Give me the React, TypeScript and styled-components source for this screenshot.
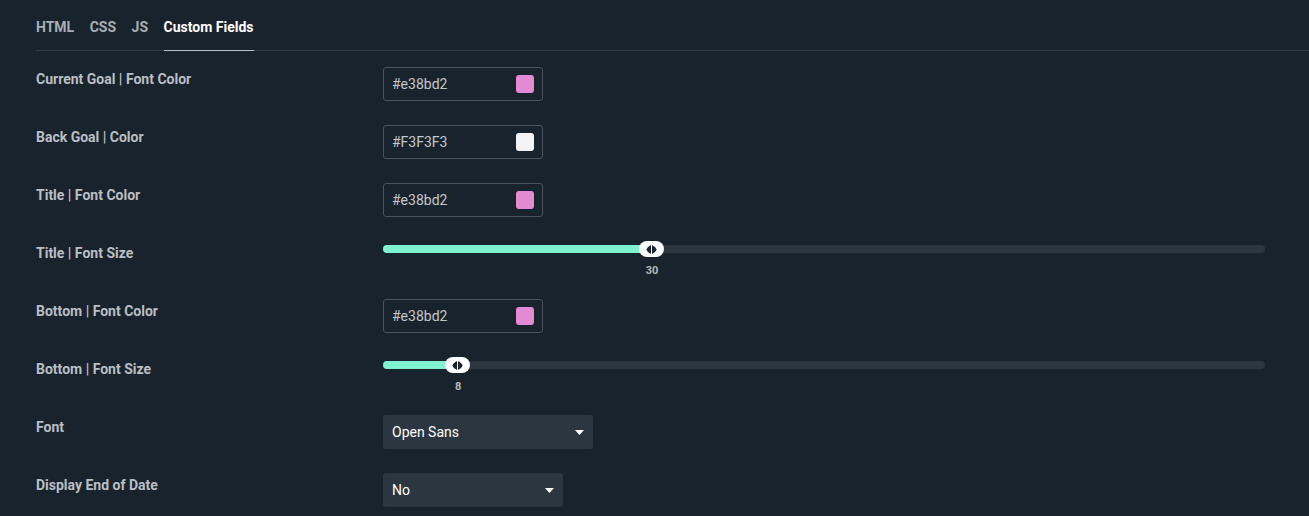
import React from "react";
import styled, { createGlobalStyle } from "styled-components";

const Global = createGlobalStyle`
  html, body { margin: 0; padding: 0; background: #19232d; }
  body { font-family: Roboto, "Liberation Sans", sans-serif; }
  * { box-sizing: border-box; }
`;

const Page = styled.div`
  width: 1309px;
  height: 516px;
  overflow: hidden;
  background: #19232d;
  padding-left: 36px;
`;

const TabBar = styled.div`
  display: flex;
  gap: 15.5px;
  height: 51px;
  border-bottom: 1px solid #333d46;
`;

const Tab = styled.div<{ $active?: boolean }>`
  font-size: 14px;
  font-weight: 700;
  padding-top: 4px;
  line-height: 46px;
  height: 51px;
  color: ${(p) => (p.$active ? "#ffffff" : "#a7aeb4")};
  border-bottom: 1px solid ${(p) => (p.$active ? "#b9bfc4" : "transparent")};
  margin-bottom: -1px;
`;

const Rows = styled.div`
  padding-top: 16px;
  display: flex;
  flex-direction: column;
`;

const Row = styled.div`
  display: grid;
  grid-template-columns: 347px 882px;
  height: 58px;
  align-items: start;
`;

const Label = styled.div`
  font-size: 14px;
  font-weight: 700;
  line-height: 24px;
  color: #b9bfc4;
`;

const ColorBox = styled.div`
  width: 160px;
  height: 34px;
  border: 1px solid #48535d;
  border-radius: 3px;
  display: flex;
  align-items: center;
  justify-content: space-between;
  padding: 0 8px 0 8px;
  font-size: 14px;
  color: #c3c8cc;
`;

const Swatch = styled.div<{ $c: string }>`
  width: 18px;
  height: 18px;
  border-radius: 3px;
  background: ${(p) => p.$c};
`;

const SliderWrap = styled.div`
  position: relative;
  width: 882px;
  height: 40px;
`;

const Track = styled.div`
  position: absolute;
  left: 0;
  right: 0;
  top: 4px;
  height: 8px;
  border-radius: 4px;
  background: #2c3740;
`;

const Fill = styled.div`
  position: absolute;
  left: 0;
  top: 4px;
  height: 8px;
  border-radius: 4px;
  background: #7ff3d0;
`;

const Thumb = styled.div`
  position: absolute;
  top: 0;
  width: 25px;
  height: 16px;
  border-radius: 8px;
  background: #ffffff;
  display: flex;
  align-items: center;
  justify-content: center;
  gap: 1px;
`;

const Value = styled.div`
  position: absolute;
  top: 23px;
  width: 40px;
  margin-left: -20px;
  text-align: center;
  font-size: 11px;
  font-weight: 700;
  color: #b3b9be;
`;

const Select = styled.div<{ $w: number }>`
  width: ${(p) => p.$w}px;
  height: 34px;
  border-radius: 3px;
  background: #2b3640;
  display: flex;
  align-items: center;
  justify-content: space-between;
  padding: 0 9px 0 9px;
  font-size: 14px;
  color: #ffffff;
`;

const Caret = () => (
  <svg width="9" height="5" viewBox="0 0 9 5">
    <path d="M0 0 L9 0 L4.5 5 Z" fill="#ffffff" />
  </svg>
);

const Arrows = () => (
  <>
    <svg width="5" height="9" viewBox="0 0 5 9">
      <path d="M5 0 Q1 2 0.3 4.5 Q1 7 5 9 Z" fill="#19232d" />
    </svg>
    <svg width="5" height="9" viewBox="0 0 5 9">
      <path d="M0 0 Q4 2 4.7 4.5 Q4 7 0 9 Z" fill="#19232d" />
    </svg>
  </>
);

const Slider = ({ value }: { value: number }) => {
  const center = (value / 100) * 882 + 3.5;
  return (
    <SliderWrap>
      <Track />
      <Fill style={{ width: center }} />
      <Thumb style={{ left: center - 12.5 }}>
        <Arrows />
      </Thumb>
      <Value style={{ left: center + 1 }}>{value}</Value>
    </SliderWrap>
  );
};

const Color = ({ v, c }: { v: string; c: string }) => (
  <ColorBox>
    <span>{v}</span>
    <Swatch $c={c} />
  </ColorBox>
);

export default function App() {
  return (
    <Page>
      <Global />
      <TabBar>
        <Tab>HTML</Tab>
        <Tab>CSS</Tab>
        <Tab>JS</Tab>
        <Tab $active>Custom Fields</Tab>
      </TabBar>
      <Rows>
        <Row>
          <Label>Current Goal | Font Color</Label>
          <Color v="#e38bd2" c="#e38bd2" />
        </Row>
        <Row>
          <Label>Back Goal | Color</Label>
          <Color v="#F3F3F3" c="#F3F3F3" />
        </Row>
        <Row>
          <Label>Title | Font Color</Label>
          <Color v="#e38bd2" c="#e38bd2" />
        </Row>
        <Row>
          <Label>Title | Font Size</Label>
          <Slider value={30} />
        </Row>
        <Row>
          <Label>Bottom | Font Color</Label>
          <Color v="#e38bd2" c="#e38bd2" />
        </Row>
        <Row>
          <Label>Bottom | Font Size</Label>
          <Slider value={8} />
        </Row>
        <Row>
          <Label>Font</Label>
          <Select $w={210}>
            <span>Open Sans</span>
            <Caret />
          </Select>
        </Row>
        <Row>
          <Label>Display End of Date</Label>
          <Select $w={180}>
            <span>No</span>
            <Caret />
          </Select>
        </Row>
      </Rows>
    </Page>
  );
}
